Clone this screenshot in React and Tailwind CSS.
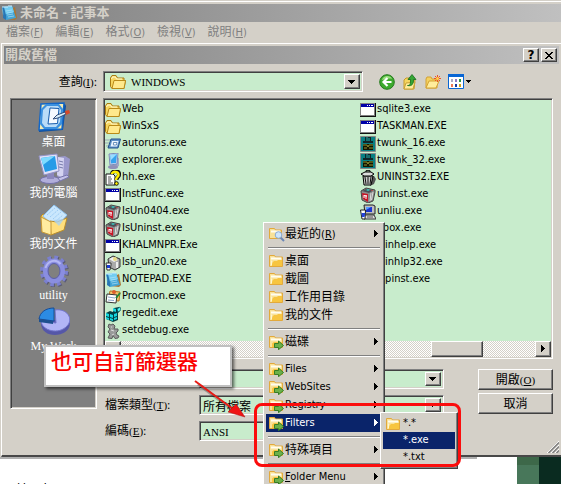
const svgBase = "w-4 h-4 shrink-0 block";

const FolderIcon = ({ className = svgBase }) => (
    <svg viewBox="0 0 16 16" className={className} aria-hidden="true">
        <path d="M.5 12.500V4l1.500-2.500h4L7.500 4H14v2.500h1.500L14 14.500H2z" fill="#f6d660" stroke="#a97b12" />
        <path d="M4 6.500h11.500L14 14.500H2z" fill="#ffe98c" stroke="#b98a18" />
        <path d="M1.500 5 2.500 3h3l1 2H12" fill="none" stroke="#fffbd4" />
    </svg>
);

const MenuFolder = () => (
    <svg viewBox="0 0 14 12" className="w-3.5 h-3 shrink-0 block" aria-hidden="true">
        <path d="M.5.5h5l1 1.500h7v9.500H.5z" fill="#f9e298" stroke="#e2a93c" />
        <path d="M2 3.500h10" stroke="#fffdf0" strokeWidth="2" />
        <path d="M3.500 7.500 5 6h3l1-1h4v6H2.500z" fill="#f7c540" />
        <path d="M2.500 10.500V5.500" stroke="#fff6cf" />
    </svg>
);

const MenuFolderGo = () => (
    <svg viewBox="0 0 15 15" className="w-[15px] h-[15px] shrink-0 block" aria-hidden="true">
        <path d="M.5 1.500h5l1 1.500h7v9.500H.5z" fill="#f9e298" stroke="#e2a93c" />
        <path d="M2 4.500h10" stroke="#fffdf0" strokeWidth="2" />
        <path d="M3 8.500 5 7h8v5H3z" fill="#f7c540" />
        <path d="M5.500 8.500h4V6l5 4.500-5 4.200v-2.200h-4z" fill="#6cb14a" stroke="#367d25" />
    </svg>
);

const MenuFolderFind = () => (
    <svg viewBox="0 0 16 15" className="w-4 h-[15px] shrink-0 block" aria-hidden="true">
        <path d="M.5 1.500h5l1 1.500h6v8.500H.5z" fill="#f9e298" stroke="#e2a93c" />
        <path d="M2 4.500h9" stroke="#fffdf0" strokeWidth="2" />
        <path d="m11.500 10.500 3.500 3.500" stroke="#6b87b5" strokeWidth="2" />
        <circle cx="9.500" cy="8" r="3.300" fill="#cfe6fa" stroke="#89aad2" />
    </svg>
);

const WindowIcon = () => (
    <svg viewBox="0 0 16 16" className={svgBase} shapeRendering="crispEdges" aria-hidden="true">
        <path d="M0 1h16v14H0z" fill="#111" />
        <path d="M0 1h15v13H0z" fill="#808080" />
        <path d="M1 2h13v11H1z" fill="#fff" />
        <path d="M1 2h13v3H1z" fill="#0000a8" />
        <path d="M7 3h1v1H7zM9 3h1v1H9zM11 3h2v1h-2z" fill="#fff" />
    </svg>
);

const UninstallIcon = () => (
    <svg viewBox="0 0 16 16" className={svgBase} aria-hidden="true">
        <path d="m1 4 5-3 9 2v2l-2 9-5 2-6-3z" fill="#8c8c8c" stroke="#444" />
        <path d="m2 4 4-2 7 1.500L9 6z" fill="#4a5056" />
        <path d="m6 3 2-1 2 1-2 1z" fill="#37c7c1" />
        <path d="m11 3 2 0-1 1z" fill="#e33" />
        <path d="m2 6 6 1v8l-5-3z" fill="#c91526" />
        <path d="M4 8v3M6 8v4M4 8.500l3 .7" stroke="#fff" />
        <path d="m13 5-1.500 8M11 6l-1 8" stroke="#ddd" />
    </svg>
);

const TrashIcon = () => (
    <svg viewBox="0 0 16 16" className={svgBase} aria-hidden="true">
        <path d="M11 6h3l2 3-2 5-4 2z" fill="#555" />
        <path d="m3 6 1 9h7l2-9z" fill="#c8c8c8" stroke="#000" />
        <path d="m1 4 4-2h6l3 2-3 2H4z" fill="#ddd" stroke="#000" />
        <path d="M6 2V.7h4V2" fill="none" stroke="#000" />
        <path d="m5 7 1 7M8 7v7m3-7-1 7" stroke="#111" />
    </svg>
);

const TwunkIcon = () => (
    <svg viewBox="0 0 16 16" className={svgBase} aria-hidden="true">
        <path d="M.5.5h15v15H.5z" fill="#087f83" stroke="#888" />
        <path d="M5 1h6v4h2v2H3V5h2z" fill="#102528" />
        <path d="M7 1v4M9 2v3" stroke="#23b5b4" />
        <path d="M3 8h10v6H3z" fill="#141400" />
        <path d="M3 9h4l1 2 1-2h4M4 12h3m2 0h4" fill="none" stroke="#8f9430" />
    </svg>
);

const AutorunsIcon = () => (
    <svg viewBox="0 0 16 16" className={svgBase} aria-hidden="true">
        <path d="M0 4h5M0 7h4M1 10h3" stroke="#9aa9b8" />
        <path d="M6 3h9.500L13 12H3z" fill="#5c8fc8" stroke="#24528c" />
        <path d="M7 5h6.500L12 10.500H5.500z" fill="#eaf4ff" />
        <path d="M8.500 6.500H12l-.6 2.500h-3z" fill="#fff" stroke="#6b91bd" />
    </svg>
);

const ExplorerIcon = () => (
    <svg viewBox="0 0 16 16" className={svgBase} aria-hidden="true">
        <path d="m10 4 4 1v8l-5 2z" fill="#a4a9c5" />
        <ellipse cx="8" cy="14" rx="5" ry="2" fill="#9090b8" />
        <path d="m4 1 9-1-1 11-7 1z" fill="#d7dcf2" stroke="#7b8bb9" />
        <path d="m5 2 7-1-1 9-5 .6z" fill="#36a3ee" />
        <path d="m5 2 7-1-6 6z" fill="#9adcff" />
    </svg>
);

const HelpFileIcon = () => (
    <svg viewBox="0 0 16 16" className={svgBase} aria-hidden="true">
        <path d="M1 4h7l2 2v9H1z" fill="#fff" stroke="#111" />
        <path d="M3 7h3M3 9h4M3 11h3M3 13h5" stroke="#555" />
        <path d="M7 4c0-4 8-4 7 1 0 2-2.500 2-2.500 5" fill="none" stroke="#111" strokeWidth="4" />
        <path d="M7 4c0-3 7-3 6.500 1 0 2-2.500 2-2.500 5" fill="none" stroke="#ffed00" strokeWidth="2.500" />
        <circle cx="11.500" cy="13.500" r="1.800" fill="#ffed00" stroke="#111" />
    </svg>
);

const InstallerIcon = () => (
    <svg viewBox="0 0 16 16" className={svgBase} aria-hidden="true">
        <path d="m3 4 5-3 7 3v8l-5 3-6-3z" fill="#aaa" stroke="#333" />
        <path d="M4 4 8 2l5 3-4 2z" fill="#f0f0f0" />
        <circle cx="10" cy="4" r="2" fill="#e9dc86" />
        <path d="M12 7v6" stroke="#eee" strokeWidth="2" />
        <path d="M1 8h5v2L5 15H2z" fill="#fff" stroke="#333" />
        <path d="M2 10h3v3H2z" fill="#193bd1" />
    </svg>
);

const ComputerSetupIcon = () => (
    <svg viewBox="0 0 16 16" className={svgBase} aria-hidden="true">
        <path d="M4 1h9l2 1v8H5z" fill="#bfbfbf" stroke="#222" />
        <path d="M6 3h6v5H6z" fill="#1934d1" />
        <path d="M6 3h5L6 6z" fill="#58a1ff" />
        <path d="M3 11h11l2 4H4z" fill="#ddd" stroke="#333" />
        <path d="M7 13h6" stroke="#555" />
        <path d="M.5 6h5L5 15H2z" fill="#fff" stroke="#222" />
        <path d="M1.500 9h4l-1 4H2z" fill="#2543d9" />
    </svg>
);

const NotepadIcon = ({ className = svgBase }) => (
    <svg viewBox="0 0 16 16" className={className} aria-hidden="true">
        <path d="m5 14 9 1 2-2-2-11-2 1z" fill="#a87636" />
        <path d="m1 2 10-1 4 12-10 2z" fill="#43a6d7" />
        <path d="m1 2 10-1 2 6-11 3z" fill="#72cdf1" />
        <path d="M1 2c2 5 1 9 1 11l3 2c1-4-1-8-2-13z" fill="#2877b5" />
        <path d="M2 1v2m2-2v2m2-2v2m2-3v2m2-2v2" stroke="#cdeeff" />
        <path d="m5 6 6-1M6 8l6-1M6 10l6-1M7 12l6-1" stroke="#c0eafa" strokeWidth=".6" />
    </svg>
);

const ProcmonIcon = () => (
    <svg viewBox="0 0 16 16" className={svgBase} aria-hidden="true">
        <path d="m5 2 10 1-1 9-11-1z" fill="#f3c66d" stroke="#b37321" />
        <path d="m2 5 10 1-1 8-10-1z" fill="#fff" stroke="#333" />
        <path d="m3 8 7 1m-7 2 6 .5" fill="none" stroke="#8aa4c8" />
        <circle cx="9" cy="3" r="2" fill="#dd5c2b" />
        <path d="m11 9 4-5" stroke="#258735" strokeWidth="2" />
    </svg>
);

const RegeditIcon = () => (
    <svg viewBox="0 0 16 16" className={svgBase} aria-hidden="true">
        <path d="m1 7 4-2 3 1 1-4 5-1 1 4-2 2v7l-5 2-7-3z" fill="#033e44" />
        <path d="m1 7 3 1v3l-3-1zm4 1 3 1v3l-3-1zm-4 3 3 1v2l-3-1zm4 1 3 1v2l-3-1zM9 8l3-1v3l-3 1zm0 4 3-1v2l-3 1zM8 2l3 1v3L8 5z" fill="#16d6de" />
        <path d="m12 3 3-2 1 3-3 2z" fill="#4ff1f4" stroke="#044" strokeWidth=".6" />
    </svg>
);

const DebugIcon = () => (
    <svg viewBox="0 0 16 16" className={svgBase} aria-hidden="true">
        <path d="m4 1 2 1 2-1 2 2-1 3 4 0v2l-2 2 1 2 2 1-1 2-3 .5-2-3-1 3-4-.5 2-4-2-2 2-3-2-2z" fill="#9a9a9a" stroke="#5b5b5b" />
        <path d="M6 4h1m-1 3 3 1m-2 4 2-1" stroke="#ddd" />
    </svg>
);

const DesktopIcon = () => (
    <svg viewBox="0 0 32 32" className="w-8 h-8 block" aria-hidden="true">
        <path d="m3 3 24-1 1 2-3 24-24 2z" fill="#0f4f9c" />
        <path d="m3 2 23-1-2 26-23 1z" fill="#f6edb3" stroke="#1266c7" strokeWidth="1.500" />
        <path d="M8 2h13l4 5-1 15-5 5H6l-4-5L3 7z" fill="#3c91df" />
        <path d="M9 4h11l3 4-1 12-4 5H7l-3-4L5 8z" fill="#b9dcf8" />
        <path d="m12 6 9 .5-1.500 15L10 22z" fill="#f5faff" stroke="#165cad" />
        <path d="m15 17 4-4 8-3 1 2-8 4z" fill="#d9effb" stroke="#314b77" />
        <path d="m27 9 4-1 1 3-4 2z" fill="#d64828" />
    </svg>
);

const ComputerIcon = () => (
    <svg viewBox="0 0 32 32" className="w-8 h-8 block" aria-hidden="true">
        <path d="m20 4 7-1 5 3-2 18-7 2-4-3z" fill="#9a98cb" />
        <path d="m20 4 6 1-1 20-6-3z" fill="#d4d3f1" />
        <path d="m21 8 4 1m-4 2 4 1m-4 2 4 1" stroke="#777bab" />
        <ellipse cx="12" cy="27" rx="10" ry="3.500" fill="#b1aedb" stroke="#7270aa" />
        <path d="m9 20 7-1v7H9z" fill="#8b87bd" />
        <path d="m1 3 18-2 2 17-15 4z" fill="#e0e0f8" stroke="#9292c5" />
        <path d="m3 5 14-2 2 13-12 3z" fill="#269be7" />
        <path d="m3 5 14-2-12 9z" fill="#7edbff" />
        <path d="m20 25 9-3 2 2-9 4z" fill="#c3c1e7" stroke="#7774ad" />
    </svg>
);

const DocumentsIcon = () => (
    <svg viewBox="0 0 32 32" className="w-8 h-8 block" aria-hidden="true">
        <path d="m3 12 2-2 6 2 2 3v15L4 28z" fill="#f4cf65" stroke="#b78a25" />
        <path d="M5 12 16 1l13 10-11 13z" fill="#cae7fd" stroke="#8fc4f0" />
        <path d="m9 11 8-7m-5 9 8-7m-5 9 8-7m-5 9 7-6" stroke="#9ccbf4" strokeDasharray="2 1" />
        <path d="m12 17 7 1 10-4-3 12-13 5z" fill="#ffdf7d" stroke="#b98c29" />
        <path d="m3 13 10 5v13l-9-3z" fill="#ffeca0" stroke="#c6993a" />
        <path d="m15 16 6 6 5-7z" fill="#a9d2f1" opacity=".8" />
    </svg>
);

const GearIcon = () => (
    <svg viewBox="0 0 32 32" className="w-8 h-8 block" aria-hidden="true">
        <ellipse cx="17" cy="17" rx="11" ry="12.500" fill="none" stroke="#5a5a74" strokeWidth="6" strokeDasharray="3.300 2.850" />
        <ellipse cx="16" cy="16" rx="11" ry="12.500" fill="none" stroke="#7b80cf" strokeWidth="6" strokeDasharray="3.300 2.850" />
        <ellipse cx="16" cy="16" rx="8.500" ry="10" fill="none" stroke="#8a8ee0" strokeWidth="5" />
        <path d="M7.500 13c2-7 10-10 15-4" fill="none" stroke="#b4b7f3" strokeWidth="2" />
        <ellipse cx="16" cy="16" rx="6" ry="7.500" fill="#808080" stroke="#5c5fae" />
    </svg>
);

const PieIcon = () => (
    <svg viewBox="0 0 32 32" className="w-8 h-8 block" aria-hidden="true">
        <path d="M3 17c0 17 29 15 29 0v-3H3z" fill="#5557a8" />
        <path d="M17 4c12-2 19 9 12 16C21 29 4 25 3 15l15 2z" fill="#b2b5f6" stroke="#7174ca" />
        <path d="M16 15 1 13C2 6 8 2 16 2z" fill="#2c8be3" stroke="#164c99" />
        <path d="M1 13v3l14 2v-3z" fill="#1e508e" />
    </svg>
);

const BackIcon = () => (
    <svg viewBox="0 0 16 16" className={svgBase} aria-hidden="true">
        <circle cx="8" cy="8" r="7.300" fill="#3daa2e" stroke="#257a1d" />
        <path d="M3 6c1-5 9-5 10-1-3-1-6 0-10 1z" fill="#9bdf80" />
        <path d="M12.500 8H5m3.500-4L4.500 8l4 4" fill="none" stroke="#fff" strokeWidth="2.200" />
    </svg>
);

const UpIcon = () => (
    <svg viewBox="0 0 16 16" className={svgBase} aria-hidden="true">
        <path d="M2 6 4 4h3l1 2h5l-1 9H2z" fill="#f5d660" stroke="#c79b2a" />
        <path d="m4 9 9-1-2 7H2z" fill="#ffed9c" stroke="#caa137" />
        <path d="M5.500 11.500c3 0 3-2 3-6H6l4-5 4 5h-2.500c0 4-1 7-6 6z" fill="#35a735" stroke="#146b1d" strokeWidth=".8" />
    </svg>
);

const NewFolderIcon = () => (
    <svg viewBox="0 0 16 16" className={svgBase} aria-hidden="true">
        <path d="M1 5 2 3h4l1 2h5v9H1z" fill="#f4d160" stroke="#d3a232" />
        <path d="M4 7h10l-3 7H1z" fill="#ffed9c" stroke="#d3a232" />
        <path d="M12.500 1v7M9 4.500h7M10 2l5 5m0-5-5 5" stroke="#ef5126" />
        <circle cx="12.500" cy="4.500" r="1.500" fill="#ffd34b" />
    </svg>
);

const ViewIcon = () => (
    <svg viewBox="0 0 16 15" className="w-4 h-[15px] shrink-0 block" aria-hidden="true">
        <path d="M.5.5h15v14H.5z" fill="#fff" stroke="#0866d4" />
        <path d="M0 0h16v3H0z" fill="#0866d4" />
        <path d="M3 5h2v3H3z" fill="#a9a9c2" />
        <path d="M7 5h2v3H7z" fill="#8f79c4" />
        <path d="M11 5h2v3h-2z" fill="#279447" />
        <path d="M3 10h2v3H3z" fill="#ee7953" />
        <path d="M7 10h2v3H7z" fill="#153c9d" />
        <path d="M11 10h2v3h-2z" fill="#d1a218" />
    </svg>
);

const Triangle = ({ dir = "down" }) => (
    <svg viewBox="0 0 8 8" className="w-2 h-2 shrink-0 block" fill="currentColor" shapeRendering="crispEdges" aria-hidden="true">
        {dir === "down" && <path d="M0 2h7v1H6v1H5v1H4v1H3V5H2V4H1V3H0z" />}
        {dir === "right" && <path d="M2 0h1v1h1v1h1v1h1v1H5v1H4v1H3v1H2z" />}
        {dir === "left" && <path d="M6 0H5v1H4v1H3v1H2v1h1v1h1v1h1v1h1z" />}
    </svg>
);

const raised = "bg-[#d4d0c8] border border-t-white border-l-white border-r-[#404040] border-b-[#404040] shadow-[inset_-1px_-1px_#808080]";
const sunken = "border border-t-[#808080] border-l-[#808080] border-r-white border-b-white shadow-[inset_1px_1px_#404040,inset_-1px_-1px_#d4d0c8]";
const tahoma = "font-['DejaVu_Sans_Condensed','Noto_Sans_CJK_TC',sans-serif]";
const ming = "font-['Liberation_Serif','Noto_Sans_CJK_TC',serif]";

const Key = ({ k }) => <span className="text-[11px]">(<span className="underline">{k}</span>)</span>;

const Combo = ({ icon, className, children }) => (
    <div className={`flex items-center bg-[#c8eccc] p-0.5 ${sunken} ${className}`}>
        {icon}
        {children}
        <span className={`w-4 h-full flex items-center justify-center ${raised}`}>
            <Triangle />
        </span>
    </div>
);

const fieldClass = "flex-1 min-w-0 h-full appearance-none bg-transparent pl-px outline-none";

const places = [
    ["桌面", DesktopIcon],
    ["我的電腦", ComputerIcon],
    ["我的文件", DocumentsIcon],
    ["utility", GearIcon],
    ["My Work", PieIcon],
];

const columns = [
    [
        ["Web", FolderIcon],
        ["WinSxS", FolderIcon],
        ["autoruns.exe", AutorunsIcon],
        ["explorer.exe", ExplorerIcon],
        ["hh.exe", HelpFileIcon],
        ["InstFunc.exe", WindowIcon],
        ["IsUn0404.exe", UninstallIcon],
        ["IsUninst.exe", UninstallIcon],
        ["KHALMNPR.Exe", WindowIcon],
        ["lsb_un20.exe", InstallerIcon],
        ["NOTEPAD.EXE", NotepadIcon],
        ["Procmon.exe", ProcmonIcon],
        ["regedit.exe", RegeditIcon],
        ["setdebug.exe", DebugIcon],
    ],
    [
        ["sqlite3.exe", WindowIcon],
        ["TASKMAN.EXE", WindowIcon],
        ["twunk_16.exe", TwunkIcon],
        ["twunk_32.exe", TwunkIcon],
        ["UNINST32.EXE", TrashIcon],
        ["uninst.exe", UninstallIcon],
        ["unliu.exe", ComputerSetupIcon],
        ["vbox.exe", WindowIcon],
        ["winhelp.exe", HelpFileIcon],
        ["winhlp32.exe", HelpFileIcon],
        ["wpinst.exe", WindowIcon],
    ],
];

const TitleBar = ({ children }) => (
    <div className="h-[18px] flex items-center bg-gradient-to-r from-[#808080] to-[#c0c0c0] text-[#d4d0c8] text-[13px] font-bold leading-[18px]">
        {children}
    </div>
);

const FileList = () => (
    <div className={`bg-[#c8eccc] p-px ${sunken}`}>
        <div className="flex h-[241px] pt-px overflow-hidden">
            {columns.map((files, i) => (
                <ul key={i} className="w-[255px] shrink-0">
                    {files.map(([name, Icon]) => (
                        <li key={name} className={`flex items-center h-[17px] gap-px text-[11px] whitespace-nowrap ${tahoma}`}>
                            <Icon />
                            {name}
                        </li>
                    ))}
                </ul>
            ))}
        </div>
        <div className="flex h-4 bg-[repeating-conic-gradient(#ffffff_0_25%,#d4d0c8_0_50%)] bg-[length:2px_2px]">
            <button aria-label="向左捲動" className={`w-4 flex items-center justify-center ${raised}`}>
                <Triangle dir="left" />
            </button>
            <div className="flex-1"></div>
            <div className={`w-[52px] ${raised}`}></div>
            <div className="w-[52px]"></div>
            <button aria-label="向右捲動" className={`w-4 flex items-center justify-center ${raised}`}>
                <Triangle dir="right" />
            </button>
        </div>
    </div>
);

const OpenDialog = () => (
    <div className="relative border-t border-l border-white border-b-2 border-b-[#484848] pt-0.5 pl-0.5">
        <div className="mr-0.5">
            <TitleBar>
                <span className="flex-1 pl-px">開啟舊檔</span>
                <button aria-label="說明" className={`w-4 h-3.5 mr-0.5 text-black flex items-center justify-center text-[12px] leading-3 font-['DejaVu_Sans'] ${raised}`}>?</button>
                <button aria-label="關閉" className={`w-4 h-3.5 mr-0.5 text-black flex items-center justify-center ${raised}`}>
                    <svg viewBox="0 0 8 7" className="w-2 h-[7px]" shapeRendering="crispEdges" aria-hidden="true">
                        <path d="M0 0h2v1h1v1h2V1h1V0h2v1H7v1H6v1H5v1h1v1h1v1h1v1H6V6H5V5H3v1H2v1H0V6h1V5h1V4h1V3H2V2H1V1H0z" />
                    </svg>
                </button>
            </TitleBar>
        </div>

        <div className={`pl-1.5 pr-2 pt-[7px] pb-3.5 text-[12px] ${ming}`}>
            <div className="flex items-center gap-1.5 mb-1.5">
                <label htmlFor="look" className="w-[87px] text-right">查詢<Key k="I" />:</label>
                <Combo icon={<span className="ml-1 mr-1"><FolderIcon /></span>} className="w-[260px] h-[21px]">
                    <select id="look" className={`${fieldClass} text-[11px]`}>
                        <option>WINDOWS</option>
                    </select>
                </Combo>
                <div className="flex items-center gap-[7px] pl-2.5">
                    <button aria-label="上一步"><BackIcon /></button>
                    <button aria-label="上移一層"><UpIcon /></button>
                    <button aria-label="建立新資料夾"><NewFolderIcon /></button>
                    <button aria-label="檢視" className="flex items-center gap-0.5">
                        <ViewIcon />
                        <svg viewBox="0 0 5 3" className="w-[5px] h-[3px]" shapeRendering="crispEdges" aria-hidden="true">
                            <path d="M0 0h5v1H4v1H3v1H2V2H1V1H0z" />
                        </svg>
                    </button>
                </div>
            </div>

            <div className="flex items-start gap-1.5">
                <nav className={`w-[87px] h-[311px] shrink-0 bg-[#808080] pt-[3px] flex flex-col gap-[3px] text-white ${sunken}`}>
                    {places.map(([name, Icon]) => (
                        <button key={name} className="flex flex-col items-center leading-4">
                            <Icon />
                            {name}
                        </button>
                    ))}
                </nav>

                <div className="flex-1 min-w-0">
                    <FileList />
                    <div className="flex items-start justify-between mt-2.5">
                        <div className="flex flex-col gap-1.5">
                            <Combo className="ml-24 w-[245px] h-5">
                                <input aria-label="檔案名稱" className={fieldClass} />
                            </Combo>
                            <div className="flex items-center">
                                <label htmlFor="ftype" className="w-24 pl-0.5">檔案類型<Key k="T" />:</label>
                                <Combo className="w-[245px] h-5">
                                    <select id="ftype" className={fieldClass}>
                                        <option>所有檔案</option>
                                    </select>
                                </Combo>
                            </div>
                            <div className="flex items-center">
                                <label htmlFor="enc" className="w-24 pl-0.5">編碼<Key k="E" />:</label>
                                <Combo className="w-[245px] h-5">
                                    <select id="enc" className={`${fieldClass} text-[11px]`}>
                                        <option>ANSI</option>
                                    </select>
                                </Combo>
                            </div>
                        </div>
                        <div className="flex flex-col gap-[3px] w-[75px]">
                            <button className={`h-[21px] ${raised}`}>開啟<Key k="O" /></button>
                            <button className={`h-[21px] ${raised}`}>取消</button>
                        </div>
                    </div>
                </div>
            </div>
        </div>

        <svg viewBox="0 0 12 12" className="absolute right-0.5 bottom-0.5 w-3 h-3" aria-hidden="true">
            <path d="M0 12 12 0M4 12l8-8M8 12l4-4" stroke="#fff" />
            <path d="M1.500 12 12 1.500M5.500 12 12 5.500M9.500 12 12 9.500" stroke="#808080" strokeWidth="1.500" />
        </svg>
    </div>
);

const MenuItem = ({ icon, label, arrow, active, children }) => (
    <li className="relative">
        <button className={`w-full h-[18px] flex items-center pl-[3px] pr-0.5 ${active ? "bg-[#0a246a] text-white" : ""}`}>
            <span className="w-4">{icon}</span>
            <span className="flex-1 text-left whitespace-nowrap">{label}</span>
            {arrow && <Triangle dir="right" />}
        </button>
        {children}
    </li>
);

const Separator = () => (
    <li className="h-[9px] px-0.5 flex items-center" role="separator">
        <span className="w-full border-t border-t-[#808080] border-b border-b-white"></span>
    </li>
);

const FolderMenu = () => (
    <ul className={`absolute left-[263px] top-[222px] w-[122px] p-0.5 text-[11px] ${tahoma} ${raised}`}>
        <MenuItem icon={<MenuFolderFind />} label={<span className="text-[12px]">最近的<Key k="R" /></span>} arrow />
        <Separator />
        <MenuItem icon={<MenuFolder />} label={<span className="text-[12px]">桌面</span>} />
        <MenuItem icon={<MenuFolder />} label={<span className="text-[12px]">截圖</span>} />
        <MenuItem icon={<MenuFolder />} label={<span className="text-[12px]">工作用目錄</span>} />
        <MenuItem icon={<MenuFolder />} label={<span className="text-[12px]">我的文件</span>} />
        <Separator />
        <MenuItem icon={<MenuFolderGo />} label={<span className="text-[12px]">磁碟</span>} arrow />
        <Separator />
        <MenuItem icon={<MenuFolderGo />} label="Files" arrow />
        <MenuItem icon={<MenuFolderGo />} label="WebSites" arrow />
        <MenuItem icon={<MenuFolderGo />} label="Registry" arrow />
        <MenuItem icon={<MenuFolderGo />} label="Filters" arrow active>
            <ul className={`absolute left-full -top-0.5 -ml-0.5 w-[78px] p-0.5 text-black ${raised}`}>
                <li><button className="w-full h-[17px] flex items-center gap-[3px] pl-[3px]"><MenuFolder />*.*</button></li>
                <li><button className="w-full h-[17px] flex items-center pl-5 bg-[#0a246a] text-white">*.exe</button></li>
                <li><button className="w-full h-[17px] flex items-center pl-5">*.txt</button></li>
            </ul>
        </MenuItem>
        <Separator />
        <MenuItem icon={<MenuFolderGo />} label={<span className="text-[12px]">特殊項目</span>} arrow />
        <Separator />
        <MenuItem icon={<MenuFolderGo />} label={<><span className="underline">F</span>older Menu</>} arrow />
    </ul>
);

const Annotations = () => (
    <>
        <div className="absolute left-[254px] top-[403px] w-[207px] h-[64px] border-[3px] border-[#fb0d0d] rounded-lg"></div>
        <div className="absolute left-[44px] top-[345px] w-[188px] h-[42px] flex items-center pl-[5px] pb-3 bg-white border-2 border-[#c0c0c0] shadow-[2px_2px_3px_#0009] text-[#fb0000] text-[21px] leading-6 font-medium whitespace-nowrap font-['Noto_Sans_CJK_TC',sans-serif]">
            也可自訂篩選器
        </div>
        <svg viewBox="0 0 60 44" className="absolute left-[190px] top-[377px] w-[60px] h-11" aria-hidden="true">
            <path d="m8 7 36 27" stroke="#0004" strokeWidth="3" />
            <path d="m5 4 38 28" stroke="#e81c16" strokeWidth="2" />
            <path d="m46 27 9 13-17-5z" fill="#f01414" stroke="#a80f0f" strokeWidth=".5" />
        </svg>
    </>
);

const App = () => {
    return (
        <main className="relative h-screen overflow-hidden bg-white text-black font-['Liberation_Sans','Noto_Sans_CJK_TC',sans-serif] flex flex-col">
            <div className="bg-[#d4d0c8] pt-px">
                <div className="border-t border-white pt-0.5">
                    <TitleBar>
                        <NotepadIcon className="w-4 h-4 mx-px shrink-0 block" />
                        <span className="pl-0.5">未命名 - 記事本</span>
                    </TitleBar>
                    <div className={`h-[21px] flex items-center gap-3 pl-1.5 text-[12px] text-[#808080] ${tahoma}`}>
                        <button>檔案<Key k="F" /></button>
                        <button>編輯<Key k="E" /></button>
                        <button>格式<Key k="O" /></button>
                        <button>檢視<Key k="V" /></button>
                        <button>說明<Key k="H" /></button>
                    </div>
                    <div className="pl-px">
                        <OpenDialog />
                    </div>
                </div>
            </div>

            <div className="flex flex-1 min-h-0 overflow-hidden">
                <div className="flex-1">
                    <div className="h-0.5 mr-10 bg-[#b0b0b0]"></div>
                    <p className="pl-[15px] pt-[21px] text-[13px] leading-5 whitespace-pre">某   大頁面</p>
                </div>
                <div className="w-[22px] bg-[#48775a] border-t-8 border-[#3d6849]"></div>
                <div className="w-[22px] bg-[#0a2b20]"></div>
            </div>

            <FolderMenu />
            <Annotations />
        </main>
    );
};

export default App;
